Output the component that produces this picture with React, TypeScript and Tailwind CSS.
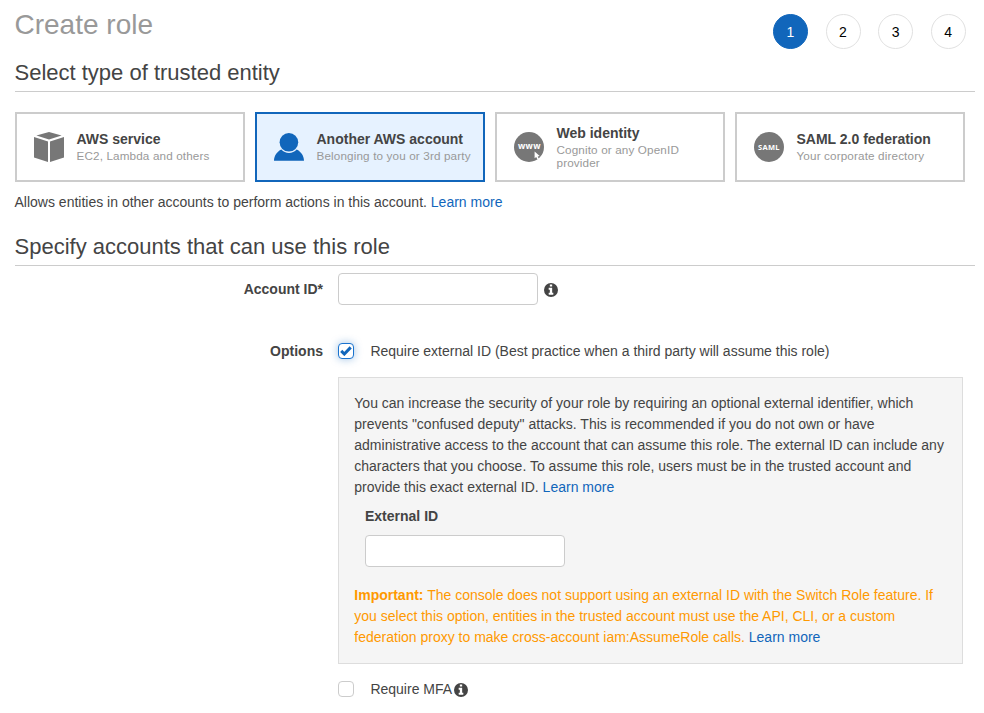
import type { ReactNode } from 'react';

function BoxIcon() {
  return (
    <svg width="32" height="32" viewBox="0 0 32 32" fill="#777" className="shrink-0">
      <path d="M3.400 4.500 16 1l12.600 3.500L16 8.400z" />
      <path d="M1 6l14 4.400V31L1 26.500z" />
      <path d="M31 6l-14 4.400V31l14-4.500z" />
    </svg>
  );
}

function UserIcon() {
  return (
    <svg width="32" height="32" viewBox="0 0 32 32" fill="#1166bb" className="shrink-0">
      <path d="M1 29.700c0-4.800 3.100-9.200 7.300-11.200C10.400 20.600 13 21.900 16 21.900s5.600-1.300 7.700-3.400C27.900 20.500 31 24.900 31 29.700z" />
      <ellipse cx="15.900" cy="11.300" rx="9.300" ry="9.300" />
    </svg>
  );
}

function WebIcon() {
  return (
    <svg width="32" height="32" viewBox="0 0 32 32" className="shrink-0">
      <circle cx="16" cy="16" r="15" fill="#777" />
      <text x="16.200" y="18.300" textAnchor="middle" textLength="22.500" lengthAdjust="spacing" fontSize="8.500" fontWeight="700" fill="#fff" className="font-['Open_Sans',sans-serif]">www</text>
      <path d="M21.600 20.500v6.800l1.600-1.300 1.300 2.400 1.400-.7-1.200-2.300 2-.4z" fill="#fff" />
    </svg>
  );
}

function SamlIcon() {
  return (
    <svg width="32" height="32" viewBox="0 0 32 32" className="shrink-0">
      <circle cx="16" cy="16" r="15" fill="#777" />
      <text x="5" y="19" letterSpacing="0.300" fontSize="7.500" fontWeight="700" fill="#fff" className="font-['Noto_Sans',sans-serif]">SAML</text>
    </svg>
  );
}

function EntityCard({ icon, title, detail, selected = false }: { icon: ReactNode; title: string; detail: string; selected?: boolean }) {
  return (
    <button
      type="button"
      className={`flex h-[70px] w-[230px] items-center border-2 pl-4 pr-2 text-left ${selected ? 'border-[#1166bb] bg-[#e6f2ff]' : 'border-[#ccc] bg-white'}`}
    >
      {icon}
      <span className="ml-[11.500px] flex flex-1 flex-col pr-5 pb-[2.400px]">
        <span className="text-[14px] leading-[20px] font-bold whitespace-nowrap">{title}</span>
        <span className={`text-[11.700px] leading-[13px] tracking-[0.140px] text-[#999] ${selected ? 'whitespace-nowrap' : ''}`}>{detail}</span>
      </span>
    </button>
  );
}

function SectionTitle({ children }: { children: ReactNode }) {
  return <h2 className="border-b border-[#ccc] pt-px pb-[5px] -indent-[0.500px] text-[22px] leading-[26px]">{children}</h2>;
}

function Link({ children }: { children: ReactNode }) {
  return <a href="#" className="text-[#1166bb]">{children}</a>;
}

function Info() {
  return (
    <svg width="14" height="14" viewBox="128 128 1536 1536" fill="#444" className="mt-0.5 shrink-0">
      <path
        fillRule="evenodd"
        d="M896 128a768 768 0 1 0 0 1536a768 768 0 1 0 0-1536zM1152 1376v-160q0-14-9-23t-23-9h-96v-512q0-14-9-23t-23-9h-320q-14 0-23 9t-9 23v160q0 14 9 23t23 9h96v320h-96q-14 0-23 9t-9 23v160q0 14 9 23t23 9h448q14 0 23-9t9-23zM1024 480v-160q0-14-9-23t-23-9h-192q-14 0-23 9t-9 23v160q0 14 9 23t23 9h192q14 0 23-9t9-23z"
      />
    </svg>
  );
}

const inputClass = 'block h-8 w-[200px] rounded-[4px] border border-[#ccc] bg-white px-2';

export default function App() {
  return (
    <main className="h-[713px] w-[984px] overflow-hidden bg-white pr-[9px] pl-[15px] font-['Liberation_Sans',Arial,sans-serif] text-[14px] leading-[21px] text-[#444]">
      <header className="flex h-[59px] justify-between">
        <h1 className="-ml-[0.500px] pt-[9px] text-[28px] leading-[32px] text-[#999]">Create role</h1>
        <ol className="flex gap-[17.600px] pt-[14px] pr-[9px] text-black">
          {[1, 2, 3, 4].map((step) => (
            <li
              key={step}
              className={`flex size-[35px] items-center justify-center rounded-full border pt-px pr-[0.600px] ${step === 1 ? 'border-[#1166bb] bg-[#1166bb] text-white' : 'border-[#e1e1e1]'}`}
            >
              {step}
            </li>
          ))}
        </ol>
      </header>

      <SectionTitle>Select type of trusted entity</SectionTitle>
      <div className="mt-5 flex gap-[10px]">
        <EntityCard icon={<BoxIcon />} title="AWS service" detail="EC2, Lambda and others" />
        <EntityCard icon={<UserIcon />} title="Another AWS account" detail="Belonging to you or 3rd party" selected />
        <EntityCard icon={<WebIcon />} title="Web identity" detail="Cognito or any OpenID provider" />
        <EntityCard icon={<SamlIcon />} title="SAML 2.0 federation" detail="Your corporate directory" />
      </div>
      <p className="mt-[10px] mb-5 -ml-[0.500px]">
        Allows entities in other accounts to perform actions in this account. <Link>Learn more</Link>
      </p>

      <SectionTitle>Specify accounts that can use this role</SectionTitle>
      <div className="mt-[7px] grid grid-cols-[308px_625px] gap-x-[15px]">
        <label htmlFor="account" className="pt-[6px] text-right font-bold">Account ID*</label>
        <div className="flex h-8 items-center gap-[6px]">
          <input id="account" className={inputClass} />
          <Info />
        </div>

        <div className="mt-9 text-right font-bold">Options</div>
        <div className="mt-9">
          <label className="flex items-start">
            <span className="mt-[2px] flex size-4 items-center justify-center rounded-[4px] border border-[#1a73cf] bg-white shadow-[0_0_8px_rgba(17,102,187,0.4)]">
              <svg width="12" height="10" viewBox="0 0 12 10" fill="none" stroke="#1166bb" strokeWidth="3">
                <path d="M1.200 4.900 4.300 8 10.700 1.400" />
              </svg>
            </span>
            <span className="ml-[16.400px]">Require external ID (Best practice when a third party will assume this role)</span>
          </label>

          <section className="mt-[15px] h-[287px] border border-[#ddd] bg-[#f5f5f5] px-[15px] pt-[15px]">
            <p className="pl-[0.300px]">
              You can increase the security of your role by requiring an optional external identifier, which prevents "confused deputy" attacks. This is recommended if you do not own or have administrative access to the account that can assume this role. The external ID can include any characters that you choose. To assume this role, users must be in the trusted account and provide this exact external ID. <Link>Learn more</Link>
            </p>
            <div className="mt-2 ml-[11px]">
              <label htmlFor="external" className="mb-2 block font-bold">External ID</label>
              <input id="external" className={inputClass} />
            </div>
            <p className="mt-[18px] pl-[0.300px] text-[#ff9900]">
              <strong>Important:</strong> The console does not support using an external ID with the Switch Role feature. If you select this option, entities in the trusted account must use the API, CLI, or a custom federation proxy to make cross-account iam:AssumeRole calls. <Link>Learn more</Link>
            </p>
          </section>

          <label className="mt-[15px] flex items-start">
            <span className="mt-[2px] size-4 rounded-[4px] border border-[#ccc] bg-white" />
            <span className="mr-[1.600px] ml-[16.400px]">Require MFA</span>
            <span className="pt-[2px]"><Info /></span>
          </label>
        </div>
      </div>
    </main>
  );
}
